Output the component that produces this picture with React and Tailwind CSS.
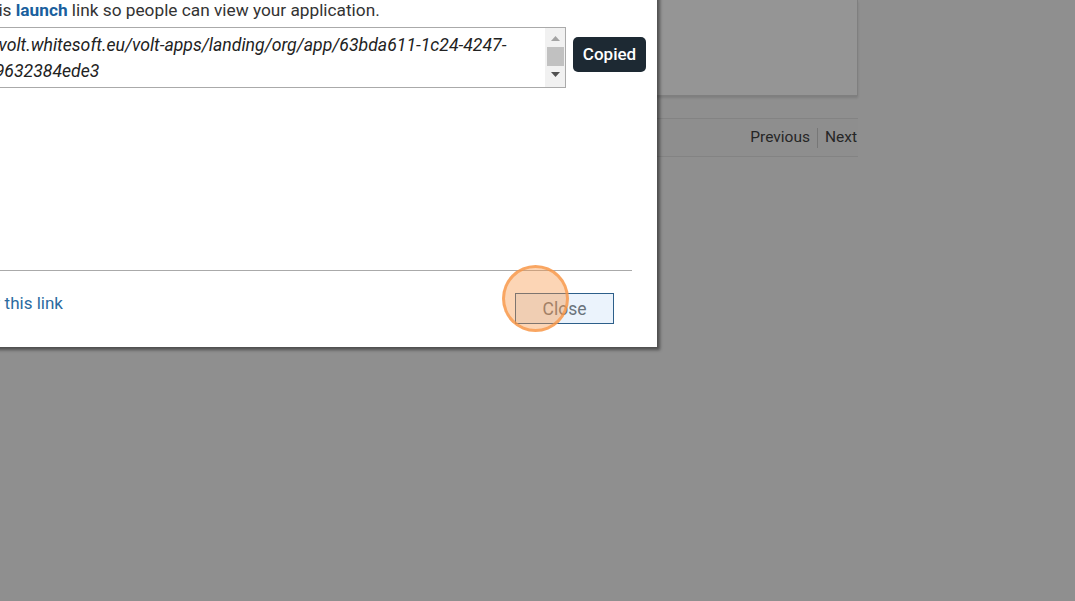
export default function App() {
    return (
        <div className="relative h-[601px] w-[1075px] overflow-hidden bg-[#8f8f8f] font-['Roboto',sans-serif]">
            {/* Dimmed page behind the dialog */}
            <div className="w-[858px]">
                <div className="h-[96px] border-r border-b border-[#7f7f7f] bg-[#959595] shadow-[0_2px_2px_rgba(0,0,0,0.12)]" />
                <div className="mt-[22px] flex h-[39px] items-center justify-end border-y border-[#838383] bg-[#8e8e8e] text-[15.5px] text-[#262626]">
                    <span className="pr-[7px]">Previous</span>
                    <span className="h-[20px] border-l border-[#777777]" />
                    <span className="pl-[7px] pr-[1px]">Next</span>
                </div>
            </div>

            {/* Share dialog */}
            <div className="absolute left-[-100px] top-[-40px] w-[757px] bg-white pt-[38px] pb-[23px] shadow-[3px_3px_3px_rgba(0,0,0,0.45)]">
                <div className="pl-[36px] pr-[11px]">
                    <p className="ml-[-1px] h-[24px] whitespace-nowrap text-[17.25px] leading-6 text-[#333333]">
                        Share this <span className="font-bold text-[#1a5f9e]">launch</span> link so people can view your application.
                    </p>

                    <div className="mt-[5px] flex items-start gap-[7px]">
                        <div className="flex h-[61px] flex-1 border border-[#aaaaaa]">
                            <div className="flex-1 whitespace-nowrap pl-[6px] pt-[4px] text-[17.65px] italic leading-[26px] text-[#222222]">
                                <div>https://volt.whitesoft.eu/volt-apps/landing/org/app/63bda611-1c24-4247-</div>
                                <div>8e1e-b9632384ede3</div>
                            </div>
                            {/* scrollbar */}
                            <div className="flex w-[20px] flex-col items-center bg-[#f1f1f1] pt-[8px]">
                                <svg width="9" height="5" viewBox="0 0 9 5"><path d="M0 5L4.5 0L9 5Z" fill="#a3a3a3" /></svg>
                                <div className="mt-[6px] h-[19px] w-[17px] bg-[#c1c1c1]" />
                                <svg className="mt-[6px]" width="9" height="5" viewBox="0 0 9 5"><path d="M0 0L4.5 5L9 0Z" fill="#505050" /></svg>
                            </div>
                        </div>
                        <button className="mt-[10px] h-[35px] w-[73px] rounded-[5px] bg-[#1d2933] text-[17px] font-medium text-white">
                            Copied
                        </button>
                    </div>
                </div>

                <div className="mt-[182px] mr-[25px] border-t border-[#aaaaaa]" />

                <div className="flex items-start justify-between pl-[41px] pr-[43px] pt-[22px]">
                    <a className="mt-[-2px] whitespace-nowrap text-[17px] leading-6 text-[#2b6aa0]">Preview this link</a>
                    <button className="h-[31px] w-[99px] border border-[#2d5f8a] bg-[#ebf3fc] pt-[2px] text-[17.5px] text-[#6a737c]">
                        Close
                    </button>
                </div>
            </div>

            {/* click highlight */}
            <div className="absolute left-[502px] top-[265px] h-[67px] w-[67px] rounded-full border-[3px] border-[rgba(247,150,70,0.75)] bg-[rgba(247,150,70,0.4)]" />
        </div>
    );
}
